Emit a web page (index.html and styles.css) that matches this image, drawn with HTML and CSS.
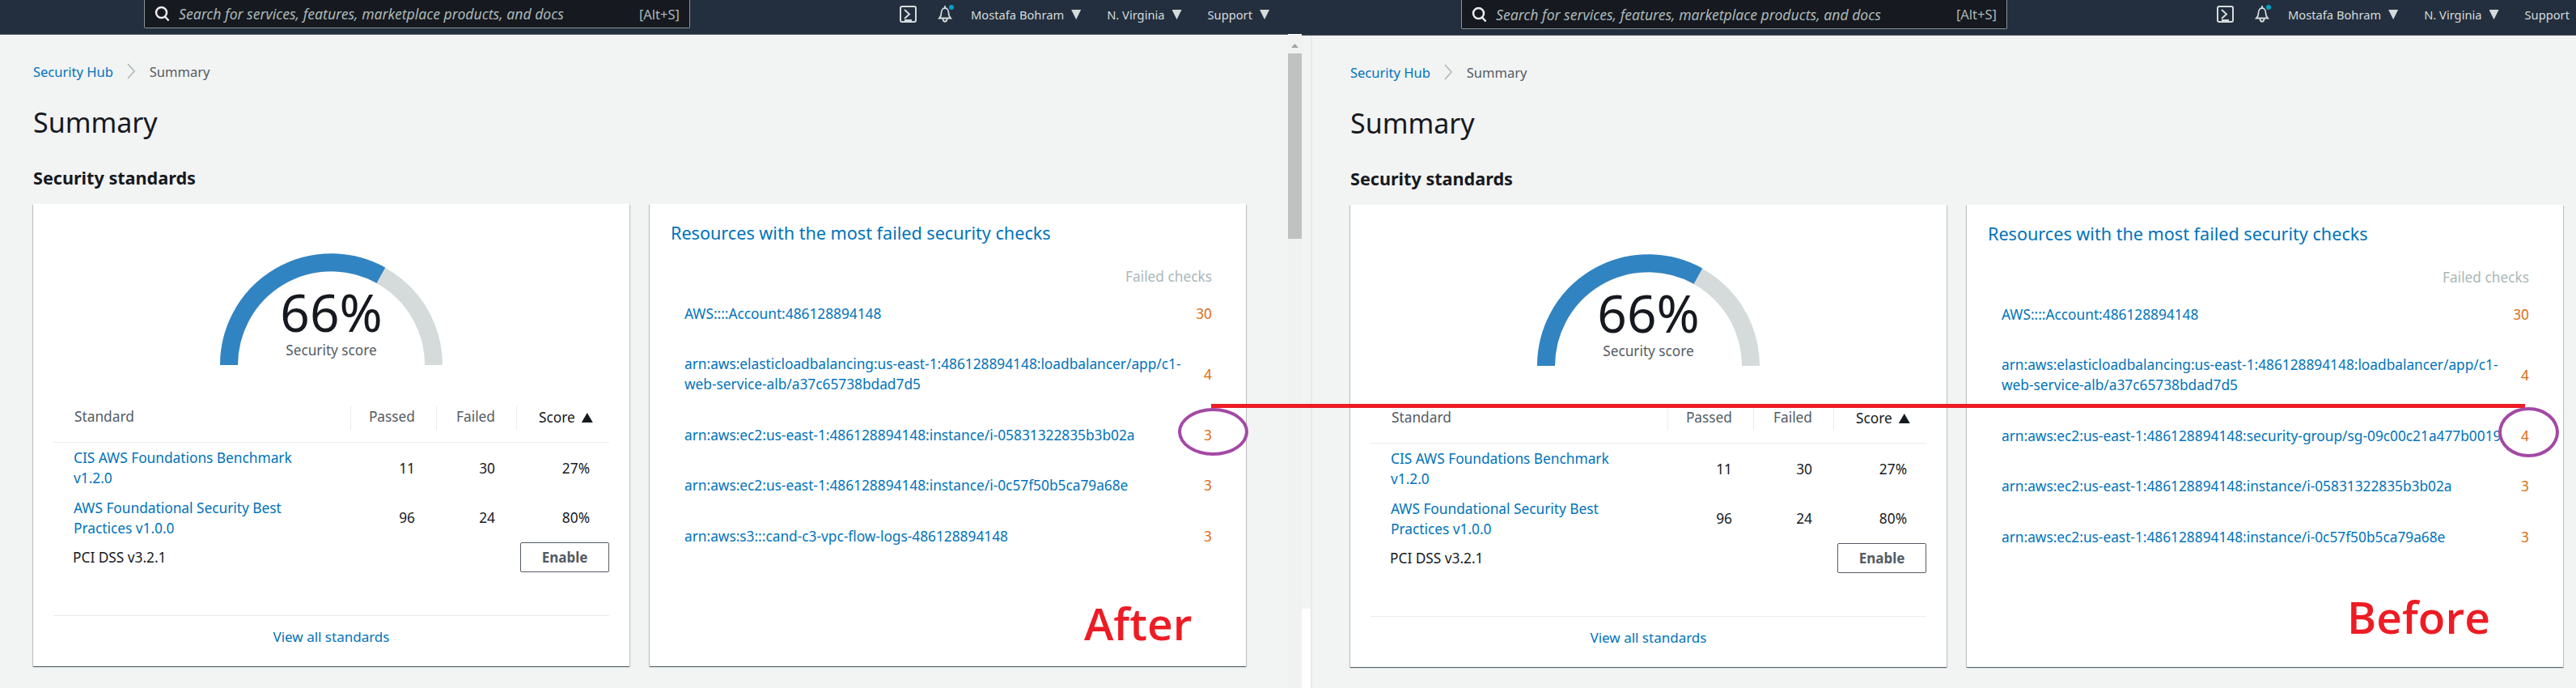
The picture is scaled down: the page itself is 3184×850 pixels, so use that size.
FILE: index.html
```html
<!DOCTYPE html>
<html lang="en">
<head>
<meta charset="utf-8">
<title>Security Hub Summary - After and Before</title>
<link rel="stylesheet" href="styles.css">
</head>
<body>
<div class="page">
  <section class="shot">
    <div class="app">
      <header class="topbar">
        <div class="search">
          <svg class="search-icon" viewBox="0 0 20 20"><circle cx="8.5" cy="8.5" r="6.5"/><path d="M13 13.5l4.500 5"/></svg>
          <span class="search-text">Search for services, features, marketplace products, and docs</span>
          <span class="search-key">[Alt+S]</span>
        </div>
        <svg class="terminal" viewBox="0 0 21 21"><rect x="1" y="1" width="19" height="19" rx="2"/><path d="M6 5l6 5.500-6 5.500M6 18h9"/></svg>
        <svg class="bell" viewBox="0 0 22 22"><path d="M3 16.500c2-2 2.500-3 2.500-6.500 0-3.500 2-6 4.500-6s4.500 2.500 4.500 6c0 3.500.5 4.500 2.500 6.500zM10 1v3M7.500 17c0 5 5 5 5 0"/><circle class="bell-dot" cx="18" cy="3" r="3"/></svg>
        <span class="nav-item nav-user">Mostafa Bohram<i class="caret"></i></span>
        <span class="nav-item nav-region">N. Virginia<i class="caret"></i></span>
        <span class="nav-item nav-support">Support<i class="caret"></i></span>
      </header>
      <main class="content">
        <nav class="crumbs"><a class="link">Security Hub</a><svg class="crumb-sep" viewBox="0 0 10 20"><path d="M1 1l8 9-8 9"/></svg><span>Summary</span></nav>
        <h1>Summary</h1>
        <h2>Security standards</h2>
        <div class="cards">
          <article class="card">
            <div class="gauge">
              <svg class="gauge-arc" viewBox="0 0 275 138"><path class="arc-track" d="M11 138a126.500 126.500 0 0 1 253 0"/><path class="arc-value" d="M11 138a126.500 126.500 0 0 1 187.900-110.800"/></svg>
              <div class="gauge-label"><span class="gauge-value">66%</span><span class="gauge-caption">Security score</span></div>
            </div>
            <div class="std-table">
              <div class="std-head">Standard</div><div class="std-head num sep">Passed</div><div class="std-head num sep">Failed</div><div class="std-head sep sorted">Score<i class="sort-caret"></i></div>
              <div class="std-rule"></div>
              <a class="link std-name">CIS AWS Foundations Benchmark v1.2.0</a><div class="num">11</div><div class="num">30</div><div class="num pct">27%</div>
              <a class="link std-name">AWS Foundational Security Best Practices v1.0.0</a><div class="num">96</div><div class="num">24</div><div class="num pct">80%</div>
              <div class="std-plain">PCI DSS v3.2.1</div><button class="enable">Enable</button>
            </div>
            <footer class="card-foot"><a class="link">View all standards</a></footer>
          </article>
          <article class="card card-list">
            <h3 class="link">Resources with the most failed security checks</h3>
            <div class="list-head">Failed checks</div>
            <div class="row"><a class="link">AWS::::Account:486128894148</a><b>30</b></div>
            <div class="row"><a class="link">arn:aws:elasticloadbalancing:us-east-1:486128894148:loadbalancer/app/c1-web-service-alb/a37c65738bdad7d5</a><b>4</b></div>
            <div class="row"><a class="link">arn:aws:ec2:us-east-1:486128894148:instance/i-05831322835b3b02a</a><b>3</b></div>
            <div class="row"><a class="link">arn:aws:ec2:us-east-1:486128894148:instance/i-0c57f50b5ca79a68e</a><b>3</b></div>
            <div class="row"><a class="link">arn:aws:s3:::cand-c3-vpc-flow-logs-486128894148</a><b>3</b></div>
          </article>
        </div>
      </main>
    </div>
  </section>

  <aside class="scrollbar"><i class="scroll-up"></i><i class="scroll-thumb"></i></aside>

  <section class="shot shot-right">
    <div class="app">
      <header class="topbar">
        <div class="search">
          <svg class="search-icon" viewBox="0 0 20 20"><circle cx="8.5" cy="8.5" r="6.5"/><path d="M13 13.5l4.500 5"/></svg>
          <span class="search-text">Search for services, features, marketplace products, and docs</span>
          <span class="search-key">[Alt+S]</span>
        </div>
        <svg class="terminal" viewBox="0 0 21 21"><rect x="1" y="1" width="19" height="19" rx="2"/><path d="M6 5l6 5.500-6 5.500M6 18h9"/></svg>
        <svg class="bell" viewBox="0 0 22 22"><path d="M3 16.500c2-2 2.500-3 2.500-6.500 0-3.500 2-6 4.500-6s4.500 2.500 4.500 6c0 3.500.5 4.500 2.500 6.500zM10 1v3M7.500 17c0 5 5 5 5 0"/><circle class="bell-dot" cx="18" cy="3" r="3"/></svg>
        <span class="nav-item nav-user">Mostafa Bohram<i class="caret"></i></span>
        <span class="nav-item nav-region">N. Virginia<i class="caret"></i></span>
        <span class="nav-item nav-support">Support<i class="caret"></i></span>
      </header>
      <main class="content">
        <nav class="crumbs"><a class="link">Security Hub</a><svg class="crumb-sep" viewBox="0 0 10 20"><path d="M1 1l8 9-8 9"/></svg><span>Summary</span></nav>
        <h1>Summary</h1>
        <h2>Security standards</h2>
        <div class="cards">
          <article class="card">
            <div class="gauge">
              <svg class="gauge-arc" viewBox="0 0 275 138"><path class="arc-track" d="M11 138a126.500 126.500 0 0 1 253 0"/><path class="arc-value" d="M11 138a126.500 126.500 0 0 1 187.900-110.800"/></svg>
              <div class="gauge-label"><span class="gauge-value">66%</span><span class="gauge-caption">Security score</span></div>
            </div>
            <div class="std-table">
              <div class="std-head">Standard</div><div class="std-head num sep">Passed</div><div class="std-head num sep">Failed</div><div class="std-head sep sorted">Score<i class="sort-caret"></i></div>
              <div class="std-rule"></div>
              <a class="link std-name">CIS AWS Foundations Benchmark v1.2.0</a><div class="num">11</div><div class="num">30</div><div class="num pct">27%</div>
              <a class="link std-name">AWS Foundational Security Best Practices v1.0.0</a><div class="num">96</div><div class="num">24</div><div class="num pct">80%</div>
              <div class="std-plain">PCI DSS v3.2.1</div><button class="enable">Enable</button>
            </div>
            <footer class="card-foot"><a class="link">View all standards</a></footer>
          </article>
          <article class="card card-list">
            <h3 class="link">Resources with the most failed security checks</h3>
            <div class="list-head">Failed checks</div>
            <div class="row"><a class="link">AWS::::Account:486128894148</a><b>30</b></div>
            <div class="row"><a class="link">arn:aws:elasticloadbalancing:us-east-1:486128894148:loadbalancer/app/c1-web-service-alb/a37c65738bdad7d5</a><b>4</b></div>
            <div class="row"><a class="link">arn:aws:ec2:us-east-1:486128894148:security-group/sg-09c00c21a477b0019</a><b>4</b></div>
            <div class="row"><a class="link">arn:aws:ec2:us-east-1:486128894148:instance/i-05831322835b3b02a</a><b>3</b></div>
            <div class="row"><a class="link">arn:aws:ec2:us-east-1:486128894148:instance/i-0c57f50b5ca79a68e</a><b>3</b></div>
          </article>
        </div>
      </main>
    </div>
  </section>

  <i class="mark-line"></i>
  <i class="mark-ring ring-after"></i>
  <i class="mark-ring ring-before"></i>
  <span class="mark-label label-after">After</span>
  <span class="mark-label label-before">Before</span>
</div>
</body>
</html>
```

FILE: styles.css
```css
* { box-sizing: border-box; }
html, body { margin: 0; height: 850px; overflow: hidden; background: #f2f3f3; }
body { font-family: "Noto Sans", "Open Sans", sans-serif; color: #16191f; }

.page { position: relative; display: flex; width: 3184px; height: 850px; overflow: hidden; }
.shot { flex: 0 0 1592px; width: 1592px; height: 850px; overflow: hidden; }
.shot-right {
  flex: 0 0 1575px; width: 1575px; padding-left: 19px;
  background:
    linear-gradient(#fff, #fff) 0 752px / 11px 98px no-repeat,
    linear-gradient(#e9ebeb, #e9ebeb) 11px 0 / 2px 850px no-repeat,
    #f2f3f3;
}
.app { width: 1592px; }
.shot-right .topbar { margin-left: -19px; width: 1611px; padding-left: 197px; height: 44px; }
.shot-right .search { height: 36px; }

.topbar { display: flex; align-items: flex-start; height: 43px; padding-left: 178px; background: #232f3e; border-bottom: 1px solid #545b64; color: #d5dbdb; }
.search { display: flex; align-items: center; flex: 0 0 675px; height: 35px; padding: 0 12px; background: #16191f; border: 1px solid #879596; border-top: 0; border-radius: 0 0 2px 2px; }
.search-icon { width: 20px; height: 20px; margin-right: 10px; fill: none; stroke: #eaeded; stroke-width: 2.500; }
.search-text { flex: 1; font-size: 17.6px; font-style: italic; color: #aab7b8; white-space: nowrap; }
.search-key { font-size: 16.500px; color: #aab7b8; }

.terminal { flex: none; width: 21px; height: 21px; margin: 7px 0 0 259px; fill: none; stroke: #d5dbdb; stroke-width: 2; }
.bell { flex: none; width: 22px; height: 22px; margin: 6px 0 0 25px; fill: none; stroke: #d5dbdb; stroke-width: 1.800; overflow: visible; }
.bell-dot { fill: #00a1c9; stroke: none; }
.nav-item { display: flex; align-items: center; flex: none; height: 36px; font-size: 14.7px; white-space: nowrap; }
.nav-user { margin-left: 20px; }
.nav-region { margin-left: 32px; }
.nav-support { margin-left: 32px; }
.caret { width: 12px; height: 12px; margin-left: 9px; background: #d5dbdb; clip-path: polygon(0 0, 100% 0, 50% 100%); }

.content { padding-left: 41px; }
.link { color: #0073bb; }
.crumbs { display: flex; align-items: center; height: 24px; margin-top: 33px; font-size: 16.500px; color: #545b64; }
.crumb-sep { width: 10px; height: 20px; margin: 0 18px 0 17px; fill: none; stroke: #aab7b8; stroke-width: 1.500; }
h1 { margin: 27px 0 0; font-size: 34px; line-height: 48px; font-weight: 400; color: #16191f; }
h2 { margin: 31px 0 0; font-size: 21.6px; line-height: 28px; font-weight: 700; color: #16191f; }
.cards { display: flex; gap: 25px; margin-top: 18px; }
.card { display: flex; flex-direction: column; width: 737px; height: 571px; padding: 0 25px; background: #fff; box-shadow: 0 1px 1px 0 rgba(0, 28, 36, .5), 1px 1px 1px 0 rgba(0, 28, 36, .15), -1px 1px 1px 0 rgba(0, 28, 36, .15); }

.gauge { display: grid; justify-items: center; margin-top: 61px; }
.gauge-arc { grid-area: 1 / 1; width: 275px; height: 138px; fill: none; stroke-width: 22; }
.arc-track { stroke: #d5dbdb; }
.arc-value { stroke: #3184c2; }
.gauge-label { grid-area: 1 / 1; display: flex; flex-direction: column; align-items: center; padding-top: 43px; }
.gauge-value { font-size: 64px; line-height: 60px; color: #16191f; }
.gauge-caption { margin-top: 5px; font-size: 17.2px; line-height: 24px; color: #545b64; }

.std-table { display: grid; grid-template-columns: 367px 106px 99px 115px; grid-template-rows: 30px 16px 62px 61px 37px; margin-top: 50px; font-size: 17.3px; line-height: 25px; align-items: center; }
.std-head { color: #545b64; height: 30px; padding-left: 26px; line-height: 28px; }
.std-head.num { padding: 0 26px 0 0; }
.sep { border-left: 1px solid #eaeded; }
.sorted { display: flex; align-items: center; padding-left: 27px; color: #16191f; }
.sort-caret { width: 14px; height: 12px; margin-left: 8px; background: #16191f; clip-path: polygon(50% 0, 100% 100%, 0 100%); }
.std-rule { grid-column: 1 / -1; align-self: end; height: 1px; background: #eaeded; }
.std-name { padding: 0 60px 0 25px; }
.num { text-align: right; padding-right: 26px; }
.pct { padding-right: 24px; }
.std-plain { grid-column: 1 / 4; padding-left: 24px; color: #16191f; }
.enable { justify-self: end; width: 110px; height: 37px; padding: 0; font: 700 17px/1 "Noto Sans", sans-serif; color: #545b64; background: #fff; border: 1px solid #545b64; border-radius: 2px; }
.card-foot { margin-top: auto; height: 63px; padding-top: 13px; border-top: 1px solid #eaeded; text-align: center; font-size: 17px; line-height: 25px; }

.card-list { padding: 0; }
h3 { margin: 21px 0 0 26px; font-size: 21.6px; line-height: 30px; font-weight: 400; }
.list-head { margin: 25px 42px 0 0; text-align: right; font-size: 17.3px; line-height: 28px; color: #aab7b8; }
.row { display: flex; align-items: center; justify-content: space-between; padding: 18.75px 42px 18.75px 43px; font-size: 17.3px; line-height: 25px; }
.row .link { width: 630px; }
.row b { font-weight: 400; color: #dd6b10; }

.scrollbar { flex: 0 0 17px; display: flex; flex-direction: column; align-items: center; height: 850px; padding-top: 43px; background: linear-gradient(#232f3e 0 42px, #fff 42px 43px, #f1f1f1 43px); }
.scroll-up { width: 9px; height: 5px; margin-top: 11px; background: #a3a3a3; clip-path: polygon(50% 0, 100% 100%, 0 100%); }
.scroll-thumb { width: 17px; height: 229px; margin-top: 7px; background: #c1c1c1; }

.mark-line { position: absolute; left: 1497px; top: 499px; width: 1624px; height: 5px; background: #ed1c24; }
.mark-ring { position: absolute; border: 4px solid #a349a4; border-radius: 50%; }
.ring-after { left: 1456px; top: 504px; width: 87px; height: 59px; }
.ring-before { left: 3088px; top: 503px; width: 75px; height: 62px; }
.mark-label { position: absolute; font-family: "Open Sans", sans-serif; font-size: 55px; font-weight: 600; line-height: 70px; color: #ed1c24; }
.label-after { left: 1340px; top: 735px; }
.label-before { left: 2901px; top: 727px; }
```
